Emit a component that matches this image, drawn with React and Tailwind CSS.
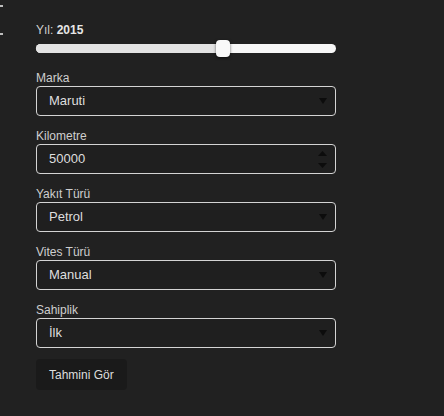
import React, { useState } from 'react';

const fields = [
  { label: 'Marka', value: 'Maruti' },
  { label: 'Kilometre', value: '50000', number: true },
  { label: 'Yakıt Türü', value: 'Petrol' },
  { label: 'Vites Türü', value: 'Manual' },
  { label: 'Sahiplik', value: 'İlk' },
];

function Caret() {
  return (
    <svg width="8" height="6" viewBox="0 0 8 6" className="shrink-0">
      <path d="M0 0h8L4 6z" fill="#0c0c0c" />
    </svg>
  );
}

function Spinner() {
  return (
    <div className="flex flex-col items-center gap-[7px] shrink-0">
      <svg width="9" height="5" viewBox="0 0 9 5">
        <path d="M0 5h9L4.5 0z" fill="#0c0c0c" />
      </svg>
      <svg width="9" height="5" viewBox="0 0 9 5">
        <path d="M0 0h9L4.5 5z" fill="#0c0c0c" />
      </svg>
    </div>
  );
}

export default function App() {
  const [year] = useState(2015);

  return (
    <div
      className="w-[444px] h-[416px] bg-[#212121] flex overflow-hidden"
      style={{ fontFamily: '"Liberation Sans", Arial, sans-serif' }}
    >
      {/* clipped sidebar edge */}
      <div className="w-[3px] flex flex-col">
        <div className="mt-[5px] h-[2px] bg-[#bdbdbd]"></div>
        <div className="mt-[26px] h-[2px] bg-[#bdbdbd]"></div>
      </div>

      <div className="ml-[33px] w-[300px] pt-[22px] flex flex-col">
        <div className="text-xs leading-4 text-[#d0d0d0]">
          Yıl: <span className="font-bold text-[#e6e6e6]">{year}</span>
        </div>

        {/* slider */}
        <div className="mt-[2px] h-[17px] flex items-center">
          <div className="relative w-full h-[9px] rounded-full bg-[#f7f7f7]">
            <div className="h-full w-[185px] rounded-l-full bg-[#e3e3e3]"></div>
            <div className="absolute left-[180px] top-[-4px] w-[14px] h-[17px] rounded-[4px] bg-[#f9f9f9] shadow-[0_1px_3px_rgba(0,0,0,0.6)]"></div>
          </div>
        </div>

        <div className="mt-[13px] flex flex-col gap-3">
          {fields.map((f) => (
            <div key={f.label} className="flex flex-col">
              <label className="text-xs leading-4 text-[#cfcfcf]">{f.label}</label>
              <div className="h-[30px] flex items-center justify-between pl-[12px] pr-[8px] border border-[#d4d4d4] rounded-[4px] bg-[#1f1f1f]">
                <span className="text-[13px] text-[#dedede]">{f.value}</span>
                {f.number ? <Spinner /> : <Caret />}
              </div>
            </div>
          ))}
        </div>

        <button className="mt-[11px] self-start h-[31px] px-[13px] rounded-[4px] bg-[#1a1a1a] text-xs text-[#dedede]">
          Tahmini Gör
        </button>
      </div>
    </div>
  );
}
